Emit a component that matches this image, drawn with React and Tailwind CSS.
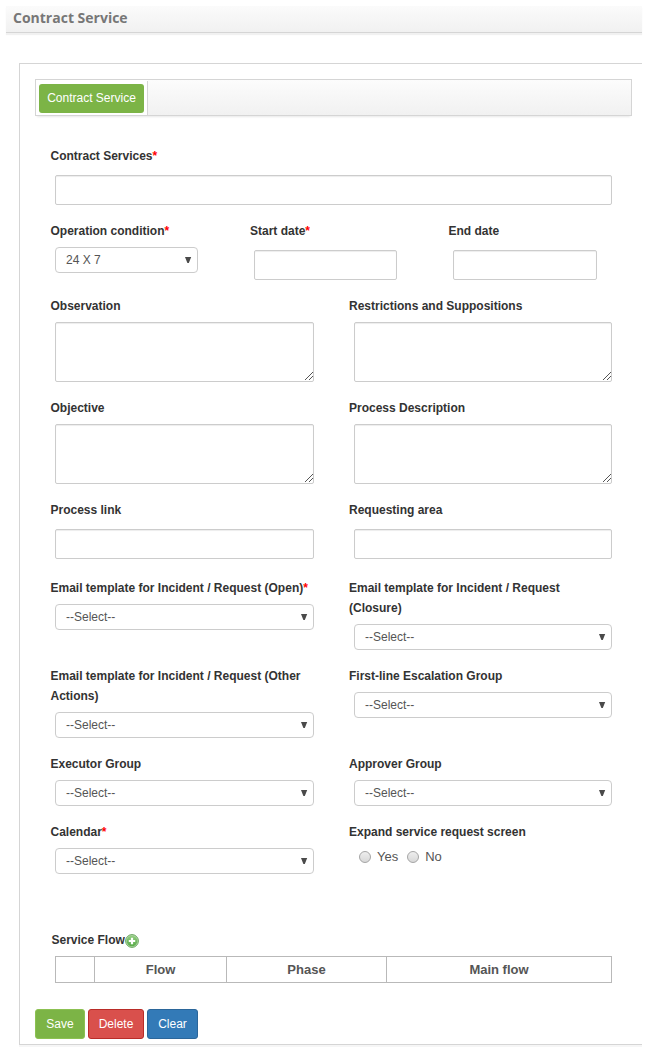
import React from "react";

function Label({ children, required, className = "" }) {
  return (
    <div className={`text-[12px] leading-[20px] font-bold text-[#333] ${className}`}>
      {children}
      {required && <span className="text-[#f00]">*</span>}
    </div>
  );
}

function TextBox({ label, required, labelClass }) {
  return (
    <>
      <Label required={required} className={labelClass}>{label}</Label>
      <div className="mt-[9px]">
        <input
          aria-label={label}
          className="ml-[5px] block h-[30px] w-[calc(100%-5px)] rounded-[2px] border border-[#ccc] bg-white px-2 text-[12px] shadow-[inset_0_1px_1px_rgba(0,0,0,0.075)]"
        />
      </div>
    </>
  );
}

function Area({ label, labelClass }) {
  return (
    <>
      <Label className={labelClass}>{label}</Label>
      <div className="relative mt-[6px] ml-[5px]">
        <textarea
          aria-label={label}
          className="block h-[60px] w-full resize-none rounded-[2px] border border-[#ccc] bg-white px-2 text-[12px] shadow-[inset_0_1px_1px_rgba(0,0,0,0.075)]"
        />
        <svg
          className="absolute right-[1px] bottom-[2px]"
          width="8"
          height="8"
          viewBox="0 0 8 8"
          fill="none"
          stroke="#555"
          strokeWidth="1"
        >
          <path d="M0 8L8 0M4 8L8 4" />
        </svg>
      </div>
    </>
  );
}

function Select({ label, required, value = "--Select--", labelClass }) {
  return (
    <>
      <Label required={required} className={labelClass}>{label}</Label>
      <div className="mt-[6px] ml-[5px] flex h-[26px] items-center justify-between rounded-[4px] border border-[#ccc] bg-white pr-[5px] pl-[10px] text-[12px] leading-[24px] text-[#555]">
        <span>{value}</span>
        <svg className="mb-px" width="7" height="6" viewBox="0 0 7 6" fill="#4a4a4a">
          <path d="M0 0H6.2L3.8 6H2.4Z" />
        </svg>
      </div>
    </>
  );
}

function Row({ className, left, right }) {
  return (
    <div className={`flex ${className}`}>
      <div className="mr-[35px] w-[264px]">{left}</div>
      <div className="w-[263px]">{right}</div>
    </div>
  );
}

function Radio({ label }) {
  return (
    <span className="flex items-center">
      <span className="mr-[6px] h-[12px] w-[12px] rounded-full border border-[#a5a5a5] bg-linear-to-b from-[#eee] to-[#d8d8d8]" />
      {label}
    </span>
  );
}

function AddIcon() {
  return (
    <svg className="mt-[4px]" width="14" height="14" viewBox="0 0 14 14">
      <defs>
        <linearGradient id="add" x1="0" y1="0" x2="0" y2="1">
          <stop offset="0" stopColor="#93cd80" />
          <stop offset="1" stopColor="#58aa48" />
        </linearGradient>
      </defs>
      <circle cx="7" cy="7" r="6.4" fill="#b5dca9" stroke="#5c9d50" strokeWidth="0.9" />
      <circle cx="7" cy="7" r="5.3" fill="url(#add)" />
      <path d="M7 3.8V10.2M3.8 7H10.2" stroke="#fff" strokeWidth="2.2" />
    </svg>
  );
}

export default function App() {
  return (
    <div className="h-[1056px] w-[648px] overflow-hidden bg-white px-[6px] pt-[6px] font-['Liberation_Sans',sans-serif]">
      <header className="h-[27px] border-b border-[#d5d5d5] bg-linear-to-b from-[#fbfbfb] to-[#f1f1f1] pl-[7px] font-['Open_Sans',sans-serif] text-[14px] leading-[24px] font-bold text-[#777] shadow-[0_2px_1px_#f1f1f1]">
        Contract Service
      </header>

      <main className="mt-[30px] ml-[13px] h-[982px] border border-r-0 border-[#d5d5d5] pt-[15px] pl-[15px] shadow-[0_2px_0_#f6f6f6]">
        <nav className="flex h-[37px] w-[597px] border border-[#d5d5d5] bg-linear-to-b from-[#fcfcfc] to-[#f1f1f1] shadow-[0_3px_2px_-2px_#e8e8e8]">
          <div className="w-[112px] bg-white pt-px">
            <div className="h-[34px] border-r border-[#d5d5d5] pt-[3px] pl-[3px]">
              <button className="block h-[29px] w-[105px] rounded-[3px] bg-[#7cb446] pb-[2px] text-[12px] text-white">
                Contract Service
              </button>
            </div>
          </div>
        </nav>

        <form className="mt-[30px] ml-[15px]">
          <div className="h-[75px] w-[562px]">
            <TextBox label="Contract Services" required labelClass="pl-[0.5px]" />
          </div>

          <div className="flex h-[75px]">
            <div className="mr-[51px] w-[148px]">
              <Select label="Operation condition" required value="24 X 7" labelClass="pl-[0.5px]" />
            </div>
            <div className="mr-[51px] w-[148px]">
              <TextBox label="Start date" required labelClass="pl-[1px]" />
            </div>
            <div className="w-[149px]">
              <TextBox label="End date" labelClass="pl-[0.5px]" />
            </div>
          </div>

          <Row
            className="h-[102px]"
            left={<Area label="Observation" labelClass="pl-[0.5px]" />}
            right={<Area label="Restrictions and Suppositions" />}
          />
          <Row
            className="h-[102px]"
            left={<Area label="Objective" labelClass="pl-[0.5px]" />}
            right={<Area label="Process Description" />}
          />
          <Row
            className="h-[78px]"
            left={<TextBox label="Process link" labelClass="pl-[0.5px]" />}
            right={<TextBox label="Requesting area" />}
          />
          <Row
            className="h-[88px]"
            left={
              <Select
                label="Email template for Incident / Request (Open)"
                required
                labelClass="pl-[0.5px]"
              />
            }
            right={<Select label="Email template for Incident / Request (Closure)" />}
          />
          <Row
            className="h-[88px]"
            left={
              <Select
                label="Email template for Incident / Request (Other Actions)"
                labelClass="pl-[0.5px]"
              />
            }
            right={<Select label="First-line Escalation Group" />}
          />
          <Row
            className="h-[68px]"
            left={<Select label="Executor Group" labelClass="pl-[0.5px]" />}
            right={<Select label="Approver Group" />}
          />
          <Row
            className="h-[108px]"
            left={<Select label="Calendar" required labelClass="pl-[0.5px]" />}
            right={
              <>
                <Label>Expand service request screen</Label>
                <div className="mt-[5px] ml-[10px] flex gap-[9px] text-[13px] leading-[20px] text-[#555]">
                  <Radio label="Yes" />
                  <Radio label="No" />
                </div>
              </>
            }
          />

          <div className="ml-[1px] flex h-[26px]">
            <Label className="pl-[0.5px]">Service Flow</Label>
            <AddIcon />
          </div>
          <div className="ml-[5px] grid h-[27px] w-[557px] grid-cols-[39px_132px_160px_1fr] divide-x divide-[#b9b9b9] border border-[#b9b9b9] text-center text-[13px] leading-[25px] font-bold text-[#555]">
            <div />
            <div>Flow</div>
            <div>Phase</div>
            <div>Main flow</div>
          </div>
        </form>

        <div className="mt-[26px] flex gap-[3px] text-[12px] text-white">
          <button className="h-[30px] w-[50px] rounded-[3px] border border-[#8cc152] bg-[#7cb446]">
            Save
          </button>
          <button className="h-[30px] w-[56px] rounded-[3px] border border-[#b92c28] bg-[#d9504c]">
            Delete
          </button>
          <button className="h-[30px] w-[51px] rounded-[3px] border border-[#2b669a] bg-[#337ab7]">
            Clear
          </button>
        </div>
      </main>
    </div>
  );
}
